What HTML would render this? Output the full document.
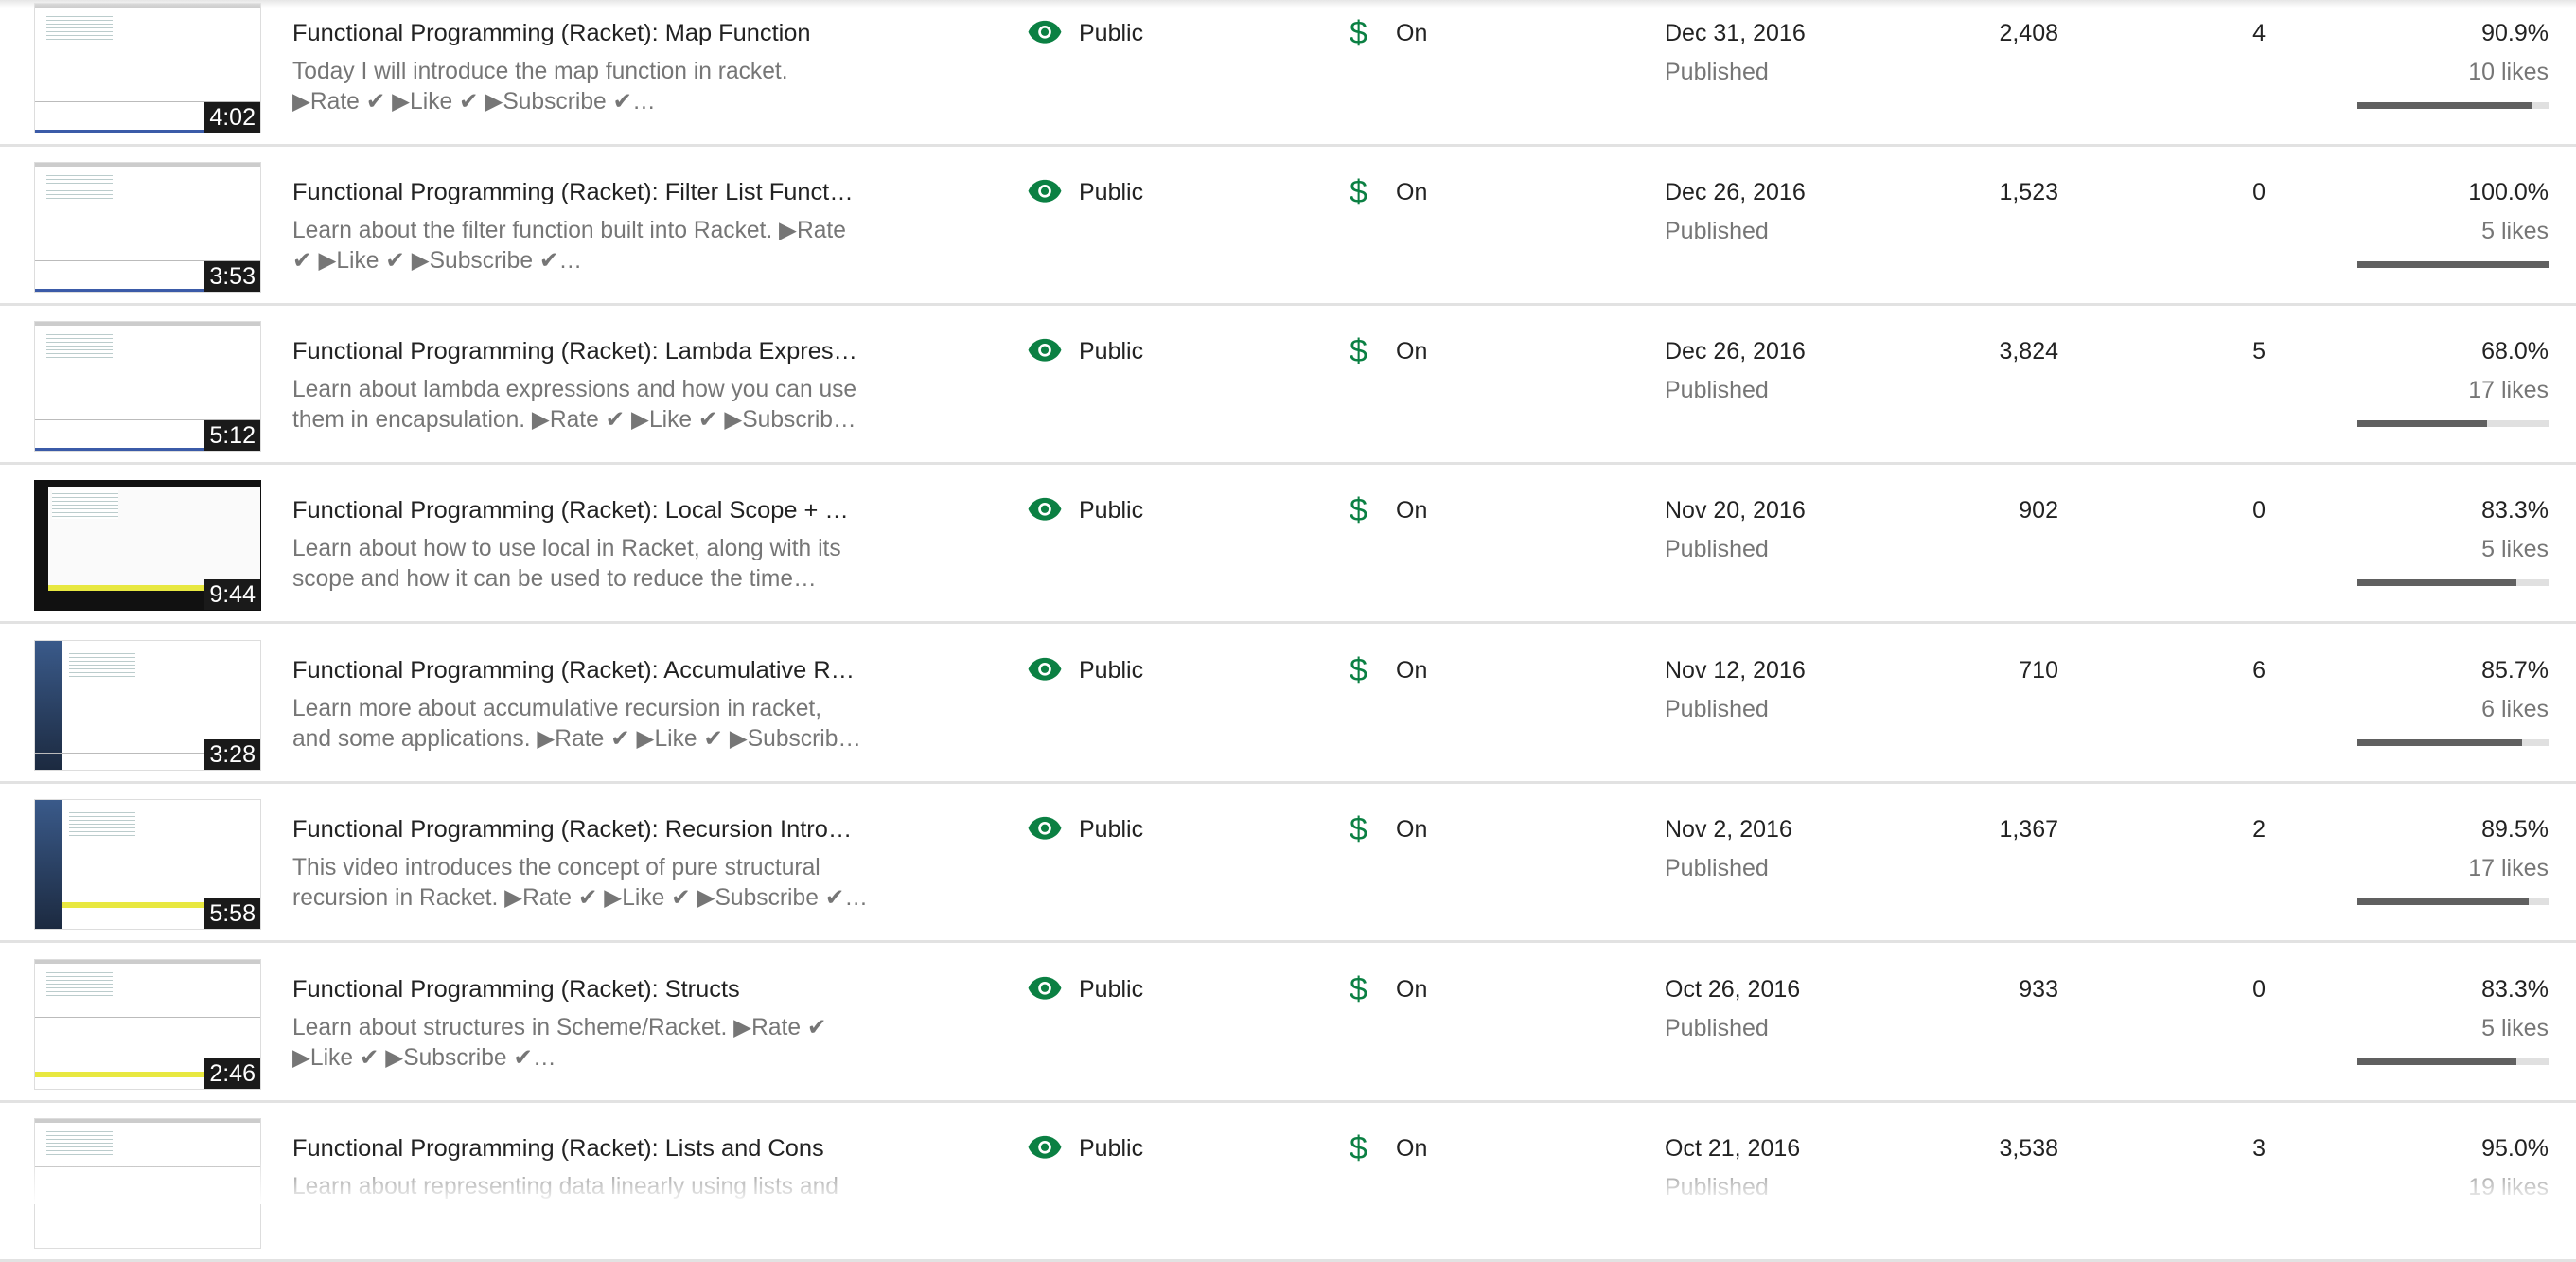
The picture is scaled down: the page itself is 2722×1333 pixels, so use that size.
<!DOCTYPE html>
<html><head><meta charset="utf-8"><style>
*{margin:0;padding:0;box-sizing:border-box}
body{width:2722px;height:1272px;overflow:hidden;background:#fff;font-family:"Liberation Sans",sans-serif;position:relative}
.row{position:absolute;left:0;width:2722px;height:168px;border-bottom:3px solid #e2e2e2}
.th{position:absolute;left:36px;top:16px;width:240px;height:138px;background:#fff;border:1px solid #ddd;overflow:hidden}
.th .bar{position:absolute;left:0;top:0;width:100%;height:4px;background:#ccc}
.th .low{position:absolute;left:0;bottom:0;width:100%;height:3px;background:#3b5ba8}
.th .sep{position:absolute;left:0;top:103px;width:100%;height:1px;background:#bbb}
.th .code{position:absolute;left:12px;top:10px;width:70px;height:30px;background:repeating-linear-gradient(#fff 0 3px,#bcc 3px 4px)}
.dur{position:absolute;right:0;bottom:0;background:#1a1a1a;color:#fff;font-size:25px;padding:3px 5px;line-height:26px}
.t{position:absolute;left:309px;top:34px;font-size:25.4px;color:#222;white-space:nowrap}
.d{position:absolute;left:309px;top:73px;font-size:24.6px;color:#767676;line-height:32px;white-space:nowrap}
.eye{position:absolute;left:1085px;top:33px}
.pub{position:absolute;left:1140px;top:34px;font-size:25px;color:#222}
.dol{position:absolute;left:1426px;top:29px;font-size:34px;color:#0b8043}
.on{position:absolute;left:1475px;top:34px;font-size:25px;color:#222}
.dt{position:absolute;left:1759px;top:34px;font-size:25px;color:#222}
.ps{position:absolute;left:1759px;top:75px;font-size:25px;color:#767676}
.v{position:absolute;right:547px;top:34px;font-size:25px;color:#222}
.c{position:absolute;right:328px;top:34px;font-size:25px;color:#222}
.p{position:absolute;right:29px;top:34px;font-size:25px;color:#222}
.l{position:absolute;right:29px;top:75px;font-size:25px;color:#767676}
.lb{position:absolute;left:2491px;top:121px;width:202px;height:7px;background:#e0e0e0}
.lb i{display:block;height:100%;background:#606060}
.top{position:absolute;left:0;top:0;width:100%;height:8px;background:linear-gradient(#e6e6e6,rgba(255,255,255,0))}
.fade{position:absolute;left:0;bottom:0;width:100%;height:50px;background:linear-gradient(rgba(255,255,255,0),#fff)}
</style></head><body>

<div class="row" style="top:-13px"><div class="th"><div class="bar"></div><div class="code"></div><div class="sep"></div><div class="low"></div><div class="dur">4:02</div></div>
<div class="t">Functional Programming (Racket): Map Function</div>
<div class="d">Today I will introduce the map function in racket.<br>▶Rate ✔ ▶Like ✔ ▶Subscribe ✔…</div>
<svg class="eye" width="38" height="26" viewBox="0 0 24 16"><path d="M12 1C7 1 2.7 4.1 1 8.5 2.7 12.9 7 16 12 16s9.3-3.1 11-7.5C21.3 4.1 17 1 12 1z" fill="#0b8043"/><circle cx="12" cy="8.5" r="4.3" fill="#fff"/><circle cx="12" cy="8.5" r="2.6" fill="#0b8043"/></svg>
<div class="pub">Public</div><div class="dol">$</div><div class="on">On</div>
<div class="dt">Dec 31, 2016</div><div class="ps">Published</div>
<div class="v">2,408</div><div class="c">4</div><div class="p">90.9%</div><div class="l">10 likes</div><div class="lb"><i style="width:91%"></i></div></div>

<div class="row" style="top:155px"><div class="th"><div class="bar"></div><div class="code"></div><div class="sep"></div><div class="low"></div><div class="dur">3:53</div></div>
<div class="t">Functional Programming (Racket): Filter List Funct…</div>
<div class="d">Learn about the filter function built into Racket. ▶Rate<br>✔ ▶Like ✔ ▶Subscribe ✔…</div>
<svg class="eye" width="38" height="26" viewBox="0 0 24 16"><path d="M12 1C7 1 2.7 4.1 1 8.5 2.7 12.9 7 16 12 16s9.3-3.1 11-7.5C21.3 4.1 17 1 12 1z" fill="#0b8043"/><circle cx="12" cy="8.5" r="4.3" fill="#fff"/><circle cx="12" cy="8.5" r="2.6" fill="#0b8043"/></svg>
<div class="pub">Public</div><div class="dol">$</div><div class="on">On</div>
<div class="dt">Dec 26, 2016</div><div class="ps">Published</div>
<div class="v">1,523</div><div class="c">0</div><div class="p">100.0%</div><div class="l">5 likes</div><div class="lb"><i style="width:100%"></i></div></div>

<div class="row" style="top:323px"><div class="th"><div class="bar"></div><div class="code"></div><div class="sep"></div><div class="low"></div><div class="dur">5:12</div></div>
<div class="t">Functional Programming (Racket): Lambda Expres…</div>
<div class="d">Learn about lambda expressions and how you can use<br>them in encapsulation. ▶Rate ✔ ▶Like ✔ ▶Subscrib…</div>
<svg class="eye" width="38" height="26" viewBox="0 0 24 16"><path d="M12 1C7 1 2.7 4.1 1 8.5 2.7 12.9 7 16 12 16s9.3-3.1 11-7.5C21.3 4.1 17 1 12 1z" fill="#0b8043"/><circle cx="12" cy="8.5" r="4.3" fill="#fff"/><circle cx="12" cy="8.5" r="2.6" fill="#0b8043"/></svg>
<div class="pub">Public</div><div class="dol">$</div><div class="on">On</div>
<div class="dt">Dec 26, 2016</div><div class="ps">Published</div>
<div class="v">3,824</div><div class="c">5</div><div class="p">68.0%</div><div class="l">17 likes</div><div class="lb"><i style="width:68%"></i></div></div>

<div class="row" style="top:491px"><div class="th" style="background:#111;border-color:#111"><div style="position:absolute;left:14px;top:6px;width:226px;height:110px;background:#fafafa"></div><div class="code" style="left:18px"></div><div style="position:absolute;left:14px;top:110px;width:226px;height:6px;background:#e8e840"></div><div class="dur">9:44</div></div>
<div class="t">Functional Programming (Racket): Local Scope + …</div>
<div class="d">Learn about how to use local in Racket, along with its<br>scope and how it can be used to reduce the time…</div>
<svg class="eye" width="38" height="26" viewBox="0 0 24 16"><path d="M12 1C7 1 2.7 4.1 1 8.5 2.7 12.9 7 16 12 16s9.3-3.1 11-7.5C21.3 4.1 17 1 12 1z" fill="#0b8043"/><circle cx="12" cy="8.5" r="4.3" fill="#fff"/><circle cx="12" cy="8.5" r="2.6" fill="#0b8043"/></svg>
<div class="pub">Public</div><div class="dol">$</div><div class="on">On</div>
<div class="dt">Nov 20, 2016</div><div class="ps">Published</div>
<div class="v">902</div><div class="c">0</div><div class="p">83.3%</div><div class="l">5 likes</div><div class="lb"><i style="width:83%"></i></div></div>

<div class="row" style="top:660px"><div class="th"><div style="position:absolute;left:0;top:0;width:28px;height:100%;background:linear-gradient(#3a5a8a,#1c2a40)"></div><div class="code" style="left:36px"></div><div class="sep" style="top:118px"></div><div class="dur">3:28</div></div>
<div class="t">Functional Programming (Racket): Accumulative R…</div>
<div class="d">Learn more about accumulative recursion in racket,<br>and some applications. ▶Rate ✔ ▶Like ✔ ▶Subscrib…</div>
<svg class="eye" width="38" height="26" viewBox="0 0 24 16"><path d="M12 1C7 1 2.7 4.1 1 8.5 2.7 12.9 7 16 12 16s9.3-3.1 11-7.5C21.3 4.1 17 1 12 1z" fill="#0b8043"/><circle cx="12" cy="8.5" r="4.3" fill="#fff"/><circle cx="12" cy="8.5" r="2.6" fill="#0b8043"/></svg>
<div class="pub">Public</div><div class="dol">$</div><div class="on">On</div>
<div class="dt">Nov 12, 2016</div><div class="ps">Published</div>
<div class="v">710</div><div class="c">6</div><div class="p">85.7%</div><div class="l">6 likes</div><div class="lb"><i style="width:86%"></i></div></div>

<div class="row" style="top:828px"><div class="th"><div style="position:absolute;left:0;top:0;width:28px;height:100%;background:linear-gradient(#3a5a8a,#1c2a40)"></div><div class="code" style="left:36px"></div><div style="position:absolute;left:28px;top:108px;width:212px;height:6px;background:#e8e840"></div><div class="dur">5:58</div></div>
<div class="t">Functional Programming (Racket): Recursion Intro…</div>
<div class="d">This video introduces the concept of pure structural<br>recursion in Racket. ▶Rate ✔ ▶Like ✔ ▶Subscribe ✔…</div>
<svg class="eye" width="38" height="26" viewBox="0 0 24 16"><path d="M12 1C7 1 2.7 4.1 1 8.5 2.7 12.9 7 16 12 16s9.3-3.1 11-7.5C21.3 4.1 17 1 12 1z" fill="#0b8043"/><circle cx="12" cy="8.5" r="4.3" fill="#fff"/><circle cx="12" cy="8.5" r="2.6" fill="#0b8043"/></svg>
<div class="pub">Public</div><div class="dol">$</div><div class="on">On</div>
<div class="dt">Nov 2, 2016</div><div class="ps">Published</div>
<div class="v">1,367</div><div class="c">2</div><div class="p">89.5%</div><div class="l">17 likes</div><div class="lb"><i style="width:89.5%"></i></div></div>

<div class="row" style="top:997px"><div class="th"><div class="bar"></div><div class="code"></div><div class="sep" style="top:60px"></div><div style="position:absolute;left:0;top:118px;width:100%;height:6px;background:#e8e840"></div><div class="dur">2:46</div></div>
<div class="t">Functional Programming (Racket): Structs</div>
<div class="d">Learn about structures in Scheme/Racket. ▶Rate ✔<br>▶Like ✔ ▶Subscribe ✔…</div>
<svg class="eye" width="38" height="26" viewBox="0 0 24 16"><path d="M12 1C7 1 2.7 4.1 1 8.5 2.7 12.9 7 16 12 16s9.3-3.1 11-7.5C21.3 4.1 17 1 12 1z" fill="#0b8043"/><circle cx="12" cy="8.5" r="4.3" fill="#fff"/><circle cx="12" cy="8.5" r="2.6" fill="#0b8043"/></svg>
<div class="pub">Public</div><div class="dol">$</div><div class="on">On</div>
<div class="dt">Oct 26, 2016</div><div class="ps">Published</div>
<div class="v">933</div><div class="c">0</div><div class="p">83.3%</div><div class="l">5 likes</div><div class="lb"><i style="width:83%"></i></div></div>

<div class="row" style="top:1165px"><div class="th"><div class="bar"></div><div class="code"></div><div class="sep" style="top:50px"></div></div>
<div class="t">Functional Programming (Racket): Lists and Cons</div>
<div class="d">Learn about representing data linearly using lists and<br>&nbsp;</div>
<svg class="eye" width="38" height="26" viewBox="0 0 24 16"><path d="M12 1C7 1 2.7 4.1 1 8.5 2.7 12.9 7 16 12 16s9.3-3.1 11-7.5C21.3 4.1 17 1 12 1z" fill="#0b8043"/><circle cx="12" cy="8.5" r="4.3" fill="#fff"/><circle cx="12" cy="8.5" r="2.6" fill="#0b8043"/></svg>
<div class="pub">Public</div><div class="dol">$</div><div class="on">On</div>
<div class="dt">Oct 21, 2016</div><div class="ps">Published</div>
<div class="v">3,538</div><div class="c">3</div><div class="p">95.0%</div><div class="l">19 likes</div></div>

<div class="top"></div><div class="fade"></div>
</body></html>
